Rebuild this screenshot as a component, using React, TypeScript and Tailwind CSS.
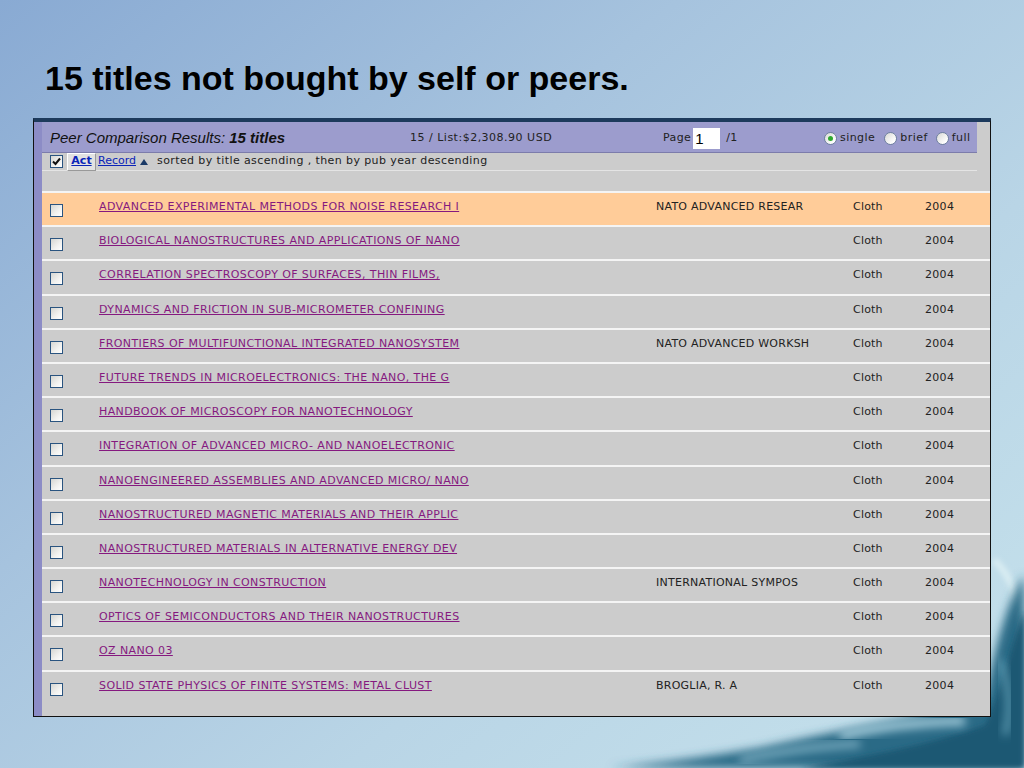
import React from "react";

const rows: [string, string][] = [
  ["ADVANCED EXPERIMENTAL METHODS FOR NOISE RESEARCH I", "NATO ADVANCED RESEAR"],
  ["BIOLOGICAL NANOSTRUCTURES AND APPLICATIONS OF NANO", ""],
  ["CORRELATION SPECTROSCOPY OF SURFACES, THIN FILMS,", ""],
  ["DYNAMICS AND FRICTION IN SUB-MICROMETER CONFINING", ""],
  ["FRONTIERS OF MULTIFUNCTIONAL INTEGRATED NANOSYSTEM", "NATO ADVANCED WORKSH"],
  ["FUTURE TRENDS IN MICROELECTRONICS: THE NANO, THE G", ""],
  ["HANDBOOK OF MICROSCOPY FOR NANOTECHNOLOGY", ""],
  ["INTEGRATION OF ADVANCED MICRO- AND NANOELECTRONIC", ""],
  ["NANOENGINEERED ASSEMBLIES AND ADVANCED MICRO/ NANO", ""],
  ["NANOSTRUCTURED MAGNETIC MATERIALS AND THEIR APPLIC", ""],
  ["NANOSTRUCTURED MATERIALS IN ALTERNATIVE ENERGY DEV", ""],
  ["NANOTECHNOLOGY IN CONSTRUCTION", "INTERNATIONAL SYMPOS"],
  ["OPTICS OF SEMICONDUCTORS AND THEIR NANOSTRUCTURES", ""],
  ["OZ NANO 03", ""],
  ["SOLID STATE PHYSICS OF FINITE SYSTEMS: METAL CLUST", "BROGLIA, R. A"],
];

function Box({ checked = false }: { checked?: boolean }) {
  return (
    <div className="w-[13px] h-[13px] border border-[#2a5480] bg-[linear-gradient(135deg,#d6d6d2_0%,#f2f2f0_60%,#ffffff_100%)] flex items-center justify-center shrink-0">
      {checked && (
        <svg width="9" height="9" viewBox="0 0 9 9">
          <path d="M1 4.5 L3.5 7 L8 1.5" stroke="#111" strokeWidth="2" fill="none" />
        </svg>
      )}
    </div>
  );
}

function Radio({ on = false }: { on?: boolean }) {
  return (
    <div className="w-[13px] h-[13px] rounded-full border border-[#6f80a0] bg-[linear-gradient(135deg,#d8d8d4_0%,#ffffff_80%)] flex items-center justify-center shrink-0">
      {on && <div className="w-[5px] h-[5px] rounded-full bg-[#2fa92f]" />}
    </div>
  );
}

export default function App() {
  return (
    <div className="relative w-[1024px] h-[768px] overflow-hidden bg-[linear-gradient(140deg,#89aad3_0%,#a6c3de_35%,#b9d5e6_65%,#c6e2ec_100%)] font-['DejaVu_Sans',sans-serif]">
      <svg className="absolute inset-0" width="1024" height="768" viewBox="0 0 1024 768">
        <defs>
          <filter id="blur" x="-20%" y="-20%" width="140%" height="140%">
            <feGaussianBlur stdDeviation="5" />
          </filter>
          <filter id="blur2" x="-20%" y="-20%" width="140%" height="140%">
            <feGaussianBlur stdDeviation="2.5" />
          </filter>
        </defs>
        <path d="M994,560 C1014,578 1022,608 1016,648" stroke="#d8ecf2" strokeWidth="7" fill="none" filter="url(#blur2)" />
        <path d="M1024,575 C1006,605 994,650 985,700 C920,716 830,732 760,748 C700,758 650,764 610,768 L1024,768 Z" fill="#2a6b86" filter="url(#blur)" />
        <path d="M1024,610 C1010,650 1000,695 985,725 C930,745 860,758 800,768 L1024,768 Z" fill="#1c5873" filter="url(#blur2)" />
        <path d="M840,736 C880,726 925,722 965,721" stroke="#a3cbda" strokeWidth="9" fill="none" filter="url(#blur)" />
        <path d="M740,760 C790,750 825,745 860,744" stroke="#88b8ca" strokeWidth="6" fill="none" filter="url(#blur)" />
        <path d="M1000,660 C1010,690 1012,710 1005,735" stroke="#5f9db4" strokeWidth="6" fill="none" filter="url(#blur)" />
      </svg>

      <div className="relative">
        <h1 className="pt-[61px] pl-[45px] text-[34px] leading-none font-bold text-black font-['Liberation_Sans',Arial,sans-serif]">
          15 titles not bought by self or peers.
        </h1>

        <div className="mt-[23px] ml-[33px] w-[958px] border-x border-b border-x-[#111] border-b-[#111] border-t-[4px] border-t-[#1d3a5c] flex text-[11px] text-[#222]">
          <div className="w-[8px] bg-[#8c8cc6] shrink-0" />
          <div className="flex-1 bg-[#cccccc] flex flex-col">
            <div className="mr-[13px] h-[31px] bg-[#9c9ccd] border-b border-b-[#7c7cab] flex items-center pl-[8px] pt-[3px]">
              <div className="w-[360px] text-[15px] italic text-[#111] font-['Liberation_Sans',Arial,sans-serif] whitespace-nowrap">
                Peer Comparison Results: <span className="font-bold">15 titles</span>
              </div>
              <div className="w-[253px] whitespace-nowrap tracking-[0.5px]">15 / List:$2,308.90 USD</div>
              <div className="w-[161px] flex items-center tracking-[0.4px]">
                <span>Page</span>
                <div className="ml-[2px] -mt-[1px] w-[27px] h-[21px] bg-white text-[15px] leading-[21px] pl-[2px] font-['Liberation_Sans',Arial,sans-serif] text-black">1</div>
                <span className="ml-[6px]">/1</span>
              </div>
              <div className="flex items-center tracking-[0.45px]">
                <Radio on />
                <span className="ml-[3px]">single</span>
                <div className="ml-[9px]"><Radio /></div>
                <span className="ml-[3px]">brief</span>
                <div className="ml-[8px]"><Radio /></div>
                <span className="ml-[3px]">full</span>
              </div>
            </div>

            <div className="mr-[13px] h-[18px] border-b border-b-[#e4e4e4] flex items-center pl-[8px] tracking-[0.4px]">
              <Box checked />
              <div className="ml-[4px] h-[18px] w-[29px] bg-[#e2e2e2] border border-t-white border-l-white border-r-[#999] border-b-[#999] flex items-center justify-center">
                <span className="font-bold text-[#0b24b8] underline tracking-normal">Act</span>
              </div>
              <span className="ml-[2px] text-[#0b24b8] underline tracking-normal">Record</span>
              <svg className="ml-[4px]" width="8" height="6" viewBox="0 0 8 6">
                <path d="M0 6 L4 0 L8 6 Z" fill="#1b3a66" />
              </svg>
              <span className="ml-[9px]">sorted by title ascending , then by pub year descending</span>
            </div>

            <div className="h-[20px]" />

            {rows.map(([title, pub], i) => (
              <div
                key={i}
                className={`h-[34.2px] border-t-2 border-t-[#f4f4f4] flex items-start ${i === 0 ? "bg-[#ffcc99]" : "bg-[#cccccc]"}`}
              >
                <div className="w-[57px] pl-[8px] pt-[11px] shrink-0">
                  <Box />
                </div>
                <div className="w-[557px] pt-[7px] leading-[14px] shrink-0">
                  <span className="text-[#85197f] underline whitespace-nowrap tracking-[0.4px]">{title}</span>
                </div>
                <div className="w-[197px] pt-[7px] leading-[14px] shrink-0 whitespace-nowrap tracking-[0.25px]">{pub}</div>
                <div className="w-[72px] pt-[7px] leading-[14px] shrink-0 tracking-[0.2px]">Cloth</div>
                <div className="pt-[7px] leading-[14px] tracking-[0.3px]">2004</div>
              </div>
            ))}
            <div className="h-[12px]" />
          </div>
        </div>
      </div>
    </div>
  );
}
